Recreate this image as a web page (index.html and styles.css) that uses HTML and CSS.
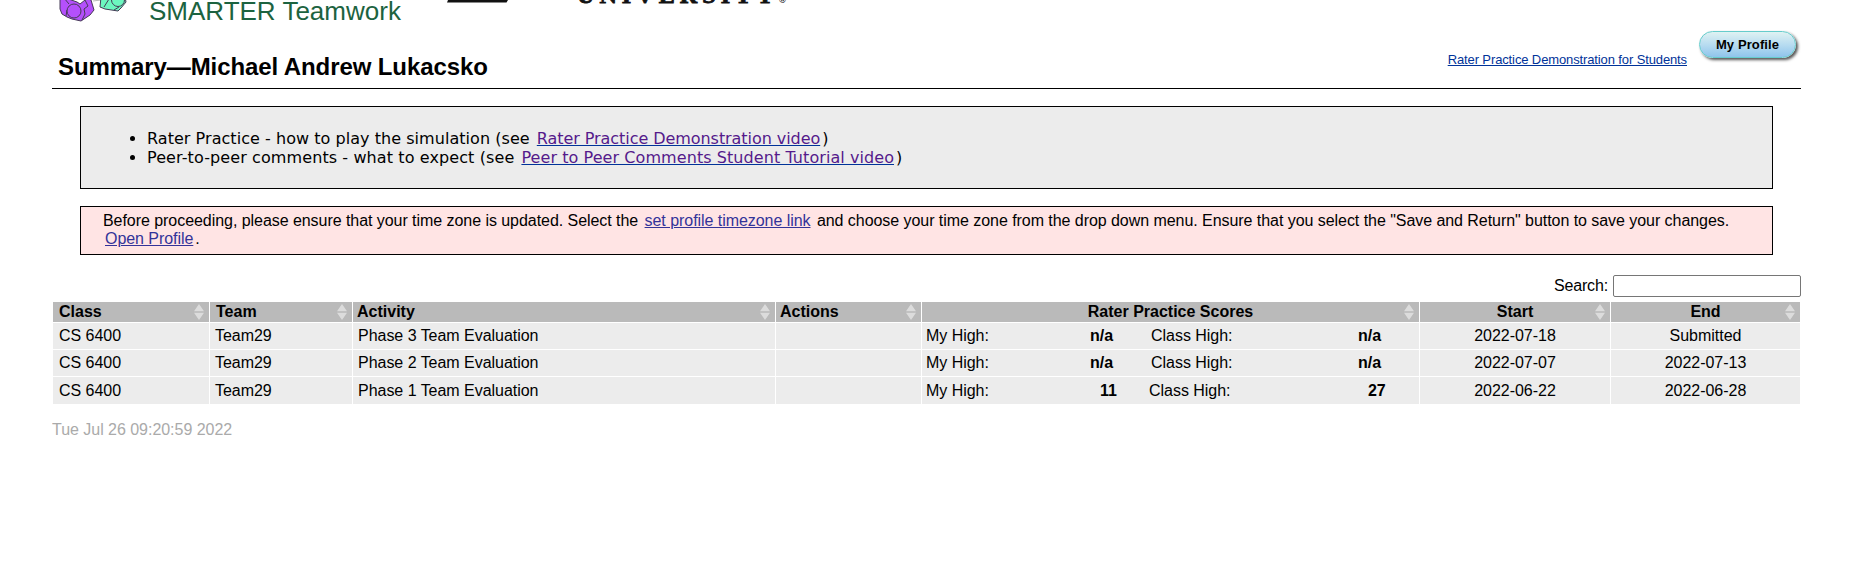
FILE: index.html
```html
<!DOCTYPE html>
<html lang="en">
<head>
<meta charset="utf-8">
<title>Summary</title>
<link rel="stylesheet" href="styles.css">
</head>
<body>
<div class="page">
  <header class="brand">
    <svg class="people" width="80" height="24" viewBox="0 0 80 24">
      <g stroke="#453a55" stroke-width="1">
        <path d="M8 -4L8 9L10 14L15 17L20 19L29 21L38 15L42 10L39 0L34 -3L33 0L28 4L25 2Z" fill="#b450fb"/>
        <path d="M12 -2L17 4M33 0L36 6L32 9L33 14L30 20M14 16L15 10" fill="none"/>
        <circle cx="22" cy="11" r="7" fill="#b450fb"/>
        <path d="M41 1L49 0" fill="none" stroke="#bbb"/>
        <path d="M49 -3L48 7L53 9L66 11L69 8L74 2L73 -3Z" fill="#6cf7bf"/>
        <path d="M52 7L57 -1M62 10L67 7" fill="none"/>
        <circle cx="66" cy="0" r="6.500" fill="#6cf7bf"/>
      </g>
    </svg>
    <span class="tagline">SMARTER Teamwork</span>
    <svg class="mark" width="61" height="3" viewBox="0 0 61 3"><path d="M1 0H61L59.500 2.500H0Z" fill="#111"/></svg>
    <span class="univ">UNIVERSITY<small>®</small></span>
  </header>
  <div class="titlebar">
    <h1>Summary—Michael Andrew Lukacsko</h1>
    <div class="tools"><a class="demo" href="#">Rater Practice Demonstration for Students</a><button class="profile">My Profile</button></div>
  </div>
  <div class="box info">
    <ul>
      <li><span class="t1">Rater Practice - how to play the simulation (see</span> <a class="l1" href="#">Rater Practice Demonstration video</a>)</li>
      <li><span class="t2">Peer-to-peer comments - what to expect (see</span> <a class="l2" href="#">Peer to Peer Comments Student Tutorial video</a>)</li>
    </ul>
  </div>
  <div class="box warn">Before proceeding, please ensure that your time zone is updated. Select the <a href="#">set profile timezone link</a> and choose your time zone from the drop down menu. Ensure that you select the "Save and Return" button to save your changes. <a href="#">Open Profile</a>.</div>
  <div class="search"><label for="q">Search:</label><input id="q" type="text"></div>
  <table>
    <thead><tr>
      <th>Class<i></i></th><th>Team<i></i></th><th class="n">Activity<i></i></th><th class="n">Actions<i></i></th><th class="c">Rater Practice Scores<i></i></th><th class="c">Start<i></i></th><th class="c">End<i></i></th>
    </tr></thead>
    <tbody>
      <tr><td>CS 6400</td><td class="m">Team29</td><td class="m">Phase 3 Team Evaluation</td><td></td><td class="score"><span>My High:</span><b>n/a</b><span>Class High:</span><b>n/a</b></td><td class="c">2022-07-18</td><td class="c">Submitted</td></tr>
      <tr><td>CS 6400</td><td class="m">Team29</td><td class="m">Phase 2 Team Evaluation</td><td></td><td class="score"><span>My High:</span><b>n/a</b><span>Class High:</span><b>n/a</b></td><td class="c">2022-07-07</td><td class="c">2022-07-13</td></tr>
      <tr class="last"><td>CS 6400</td><td class="m">Team29</td><td class="m">Phase 1 Team Evaluation</td><td></td><td class="score num"><span>My High:</span><b>11</b><span>Class High:</span><b>27</b></td><td class="c">2022-06-22</td><td class="c">2022-06-28</td></tr>
    </tbody>
  </table>
  <div class="stamp">Tue Jul 26 09:20:59 2022</div>
</div>
</body>
</html>
```

FILE: styles.css
```css
* { box-sizing: border-box; }
body { margin: 0; background: #fff; color: #000; font: 16px/18px "Liberation Sans", Arial, sans-serif; }
.page { width: 1749px; margin-left: 52px; height: 586px; overflow: hidden; }
.brand { height: 24px; display: flex; align-items: flex-start; overflow: hidden; }
.people { flex: none; }
.tagline { width: 298px; padding-left: 17px; font-size: 26px; line-height: 28px; margin-top: -3px; color: #1c6340; white-space: nowrap; }
.mark { flex: none; margin-left: 17px; }
.univ { margin: -17px 0 0 69px; font: bold 24px/24px "Liberation Serif", serif; letter-spacing: 5.1px; color: #111; -webkit-text-stroke: .9px #111; }
.univ small { font-size: 10px; -webkit-text-stroke: 0; }
.titlebar { height: 65px; border-bottom: 1px solid #000; display: flex; justify-content: space-between; }
h1 { margin: 29px 0 0 6px; font-size: 24px; line-height: 28px; letter-spacing: -.09px; white-space: nowrap; }
.tools { display: flex; align-items: flex-start; padding-right: 5px; }
.demo { margin: 27px 12px 0 0; font-size: 13px; line-height: 18px; letter-spacing: -.12px; color: #003399; }
.profile { width: 97px; height: 27px; margin-top: 7px; padding: 0; border: 1px solid #66cccc; border-radius: 14px; background: linear-gradient(#dff2f2, #b4daf0 55%, #8fc4ec); box-shadow: 2px 2px 3px #555; font: bold 13px "Liberation Sans", sans-serif; letter-spacing: .1px; color: #000; }
.box { width: 1693px; margin-left: 28px; border: 1px solid #000; }
.info { margin-top: 17px; height: 83px; background: #ececec; padding: 22px 0 0 66px; font: 16px/19px "DejaVu Sans", Verdana, sans-serif; }
ul { margin: 0; padding: 0; list-style-position: outside; }
.info a { color: #551a8b; text-decoration-color: #003399; margin: 0 2px; }
.t1 { letter-spacing: .045px; }
.t2 { letter-spacing: .1px; }
.info .l1 { letter-spacing: -.06px; }
.info .l2 { letter-spacing: .07px; }
.warn { margin-top: 17px; height: 49px; background: #ffe4e4; padding: 5px 22px 0; letter-spacing: -.051px; }
.warn a { color: #333399; margin: 0 2px; }
.search { height: 23px; margin-top: 20px; display: flex; justify-content: flex-end; align-items: flex-start; gap: 5px; }
.search label { margin-top: 2px; letter-spacing: -.15px; }
.search input { width: 188px; height: 22px; padding: 1px 2px; border: 1px solid #767676; border-radius: 2px; }
table { display: grid; grid-template-columns: 156px 142px 422px 145px 497px 190px 189px; grid-template-rows: 20px 26px 26px 27px; gap: 1px; margin: 4px 0 0 1px; width: 1747px; }
thead, tbody, tr { display: contents; }
th { position: relative; background: #bababa; text-align: left; padding: 1px 6px; }
th.n { padding-left: 4px; }
th i { position: absolute; right: 5px; top: 2px; width: 10px; height: 16px; background: #dcdcdc; clip-path: polygon(50% 0, 100% 46%, 0 46%, 0 54%, 100% 54%, 50% 100%, 0 54%, 0 46%); }
td { background: #ececec; padding: 4px 6px; letter-spacing: -.03px; }
td.m { padding-left: 5px; }
.last td { padding-top: 5px; }
th.c, td.c { text-align: center; }
td.score { display: grid; grid-template-columns: 164px 61px 207px 1fr; padding-left: 4px; padding-right: 0; }
td.num { grid-template-columns: 174px 49px 219px 1fr; }
.stamp { margin-top: 17px; letter-spacing: -.03px; color: #aaa; }
```
